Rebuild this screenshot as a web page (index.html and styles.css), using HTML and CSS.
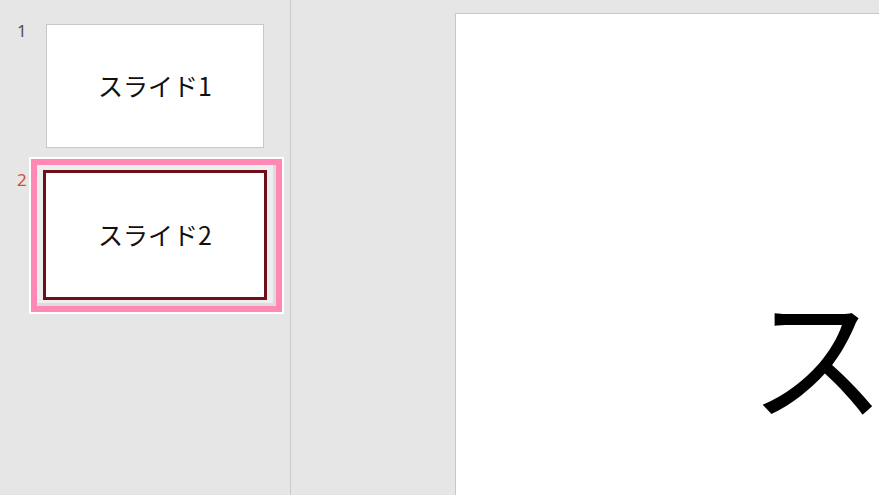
FILE: index.html
```html
<!DOCTYPE html>
<html lang="ja">
<head>
<meta charset="utf-8">
<title>スライド</title>
<link rel="stylesheet" href="styles.css">
</head>
<body>
<div class="app">
  <aside class="sidebar">
    <div class="item">
      <span class="num">1</span>
      <div class="thumb"><span class="thumb-text">スライド1</span></div>
    </div>
    <div class="item item-selected">
      <span class="num">2</span>
      <div class="thumb thumb-selected"><span class="thumb-text">スライド2</span></div>
    </div>
  </aside>
  <main class="stage">
    <div class="slide"><span class="slide-text">スライド2</span></div>
  </main>
</div>
</body>
</html>
```
FILE: styles.css
```css
html, body {
  margin: 0;
  padding: 0;
  height: 100%;
  overflow: hidden;
  background: #e6e6e6;
}
.app {
  display: flex;
  height: 100%;
  font-family: "Noto Sans CJK JP", "Noto Sans", sans-serif;
}
.sidebar {
  position: relative;
  z-index: 0;
  flex: 0 0 291px;
  box-sizing: border-box;
  border-right: 1px solid #c9c9c9;
  padding-top: 21px;
  display: flex;
  flex-direction: column;
  gap: 19px;
}
.item {
  display: flex;
  align-items: flex-start;
}
.num {
  width: 43px;
  box-sizing: border-box;
  padding-left: 17px;
  margin-top: -2px;
  font-family: "Noto Sans", "DejaVu Sans", sans-serif;
  font-size: 17px;
  line-height: 24px;
  color: #505050;
}
.item-selected .num {
  color: #cd5036;
}
.thumb {
  position: relative;
  box-sizing: border-box;
  width: 218px;
  height: 124px;
  margin: 3px;
  border: 1px solid #c8c8c8;
  background: #fff;
  display: flex;
  align-items: center;
  justify-content: center;
}
.thumb-selected {
  width: 224px;
  height: 130px;
  margin: 0;
  border: 3px solid #6e0f1a;
}
.thumb-selected::before {
  content: "";
  position: absolute;
  top: -16px;
  left: -17px;
  right: -20px;
  bottom: -17px;
  z-index: -1;
  border: 2px solid #fff;
  background: #eeeeee;
  box-shadow: inset 0 0 0 6px #ff88b5, inset -9px -9px 0 0 #dcdcdc;
}
.thumb-text {
  font-size: 25px;
  line-height: 1;
  color: #111;
  margin-top: -2px;
}
.stage {
  flex: 1 1 auto;
  padding: 13px 0 0 164px;
  overflow: hidden;
}
.slide {
  width: 1211px;
  height: 676px;
  box-sizing: border-box;
  border-left: 1px solid #c8c8c8;
  border-top: 1px solid #c8c8c8;
  background: #fff;
  display: flex;
  align-items: center;
  justify-content: center;
}
.slide-text {
  font-size: 137px;
  line-height: 1;
  color: #000;
  white-space: nowrap;
}
```
